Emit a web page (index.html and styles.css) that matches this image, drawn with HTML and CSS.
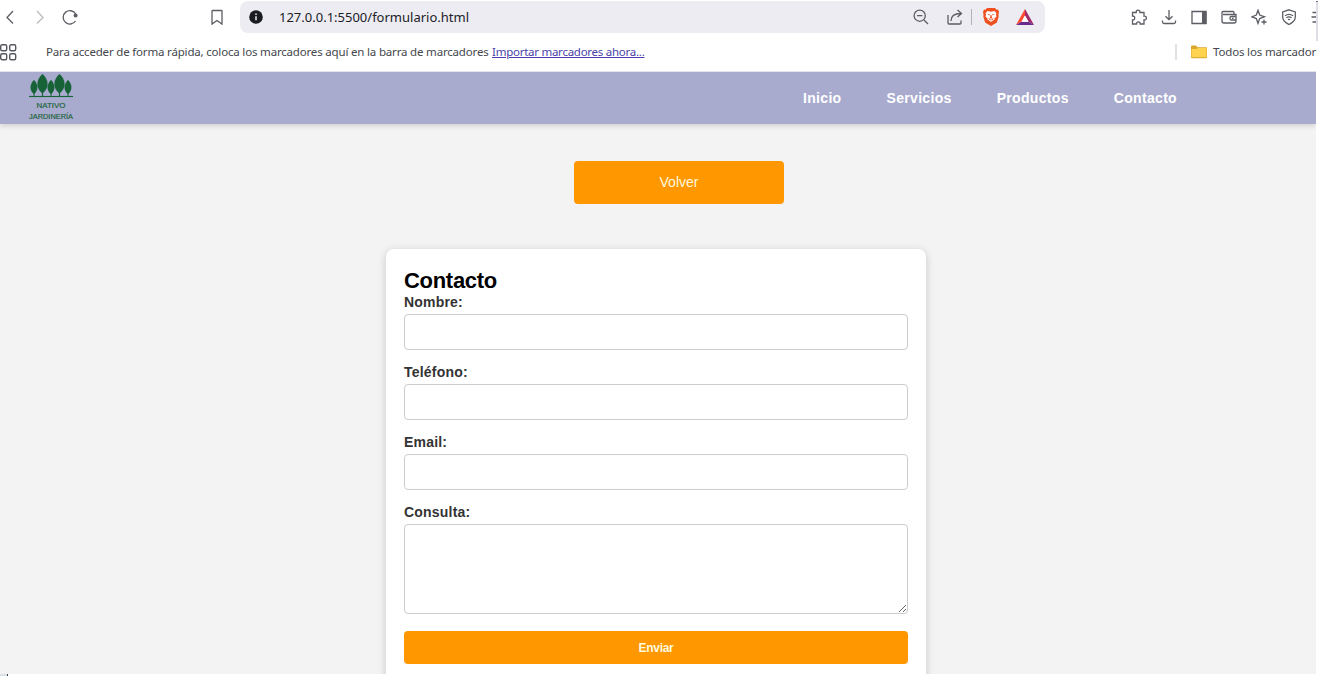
FILE: index.html
```html
<!DOCTYPE html>
<html lang="es">
<head>
<meta charset="utf-8">
<title>Nativo Jardinería - Contacto</title>
<link rel="stylesheet" href="styles.css">
</head>
<body>
<div class="window">
  <div class="toolbar">
    <div class="nav-icons">
      <svg class="icon" viewBox="0 0 16 16"><path d="M11 2 5 8.500l6 6"/></svg>
      <svg class="icon faded" viewBox="0 0 16 16"><path d="m5 2 6 6.500-6 6"/></svg>
      <svg class="icon" viewBox="0 0 16 16"><path d="M13.700 5A6.700 6.700 0 1 0 13.500 12"/><circle class="solid" cx="13.600" cy="6.500" r="2"/></svg>
    </div>
    <svg class="icon bookmark" viewBox="0 0 16 16"><path d="M3.500 1.500h9q.5 0 .5.600v13l-5-3.600-5 3.600v-13q0-.6.500-.6z"/></svg>
    <div class="address">
      <svg class="info" viewBox="0 0 14 14"><circle cx="7" cy="7" r="6.800"/><path d="M7 6.200v4M7 3.500v1.500"/></svg>
      <span class="url">127.0.0.1:5500/formulario.html</span>
      <svg class="icon zoom" viewBox="0 0 16 16"><circle cx="6.700" cy="6.700" r="5.600"/><path d="m11 11 4 4M4 6.700h5.400"/></svg>
      <svg class="icon share" viewBox="0 0 16 16"><path d="M1 6v8q0 1 1 1h11q1 0 1-1v-2.500M4 12c0-5 3-7.500 10-7.500M10.500 1 14.500 4.500l-4 3.500"/></svg>
      <span class="divider"></span>
      <svg class="brave" viewBox="0 0 16 18"><path fill="#f0501e" d="M4 0h8l1.500 1.700 1.500-.2 1 2.500-.5 2.500.2 2-1.800 6L8 18l-5.900-3.500-1.800-6 .2-2L0 4l1-2.500 1.500.2z"/><path fill="#fff" d="m4.500 3 3.500.7 3.500-.7 2 2.300-.6 1.200.6 2-2.200 2.300.3 1-1 .3L8 14l-2.600-1.900-1-.3.300-1-2.200-2.300.6-2-.6-1.200z"/><path fill="#f0501e" d="m4 5.700 3 .7-.5 1.200zm8 0-3 .7.500 1.200zM7.500 7h1l.5 3-1 .8-1-.8zM5.500 9.400 8 12l2.500-2.600-.5 2L8 12.600l-2-1.200z"/></svg>
      <svg class="bat" viewBox="0 0 18 16"><path fill="#ff4b31" d="M9 0 0 16l5.500-3.300L9 6.500z"/><path fill="#a02868" d="m9 0 9 16-5.500-3.300L9 6.500z"/><path fill="#672b90" d="M0 16h18l-5.500-3.300h-7z"/><path fill="#fff" d="m9 6.500 3.500 6.200h-7z"/></svg>
    </div>
    <div class="tools">
      <svg class="icon" viewBox="0 0 16 16"><path d="M2 3.500h3.200C4.500.3 9.500.3 8.900 3.500H13v3.600c3.200-.6 3.200 4.400 0 3.800V15H9.200c.4-2.800-4-2.800-3.600 0H1.500v-4c3 .4 3-4.400 0-4V3.500z"/></svg>
      <svg class="icon" viewBox="0 0 16 16"><path d="M8 1v9.500M4.500 7.200 8 10.700l3.500-3.500M1.500 11.500V13q0 1.500 1.500 1.500h10q1.500 0 1.500-1.500v-1.500"/></svg>
      <svg class="icon" viewBox="0 0 16 16"><path d="M1 2.500h14v12H1z"/><path class="solid" d="M11 2h4.500v13H11z"/></svg>
      <svg class="icon" viewBox="0 0 16 16"><path d="M13 5V3.500q0-1-1-1H2q-1 0-1 1V12q0 2 2 2h10q2 0 2-2V5.500H2M15 7.500h-4.500q-1.500 0-1.500 1.300v.9q0 1.300 1.500 1.300H15M11 9.300h1.500"/></svg>
      <svg class="icon" viewBox="0 0 16 16"><path d="M7 1.200 8.700 6l4.800 1.800-4.800 1.800L7 14.400 5.300 9.600.7 7.800 5.300 6z"/><path d="M13 10.500v5M10.500 13h5"/></svg>
      <svg class="icon" viewBox="0 0 16 16"><path d="m8 .8 6.300 2.100v5.300c0 3.500-3.200 5.600-6.300 7.400-3.100-1.800-6.300-3.900-6.300-7.400V2.900z"/><path d="M4 6.800q4-2.800 8 0M5.400 8.800q2.600-1.700 5.200 0M7 10.600q1-.6 2 0"/></svg>
      <svg class="icon" viewBox="0 0 16 16"><path d="M1.500 3.500h13M.5 8h14M1.500 13h13"/></svg>
    </div>
  </div>

  <div class="bookmarks">
    <svg class="apps" viewBox="0 0 17 17"><rect x=".7" y=".7" width="6" height="6" rx="1.500"/><rect x="9.700" y=".7" width="6" height="6" rx="1.500"/><rect x=".7" y="9.700" width="6" height="6" rx="1.500"/><rect x="9.700" y="9.700" width="6" height="6" rx="1.500"/></svg>
    <span class="hint">Para acceder de forma rápida, coloca los marcadores aquí en la barra de marcadores</span>
    <a class="import">Importar marcadores ahora...</a>
    <span class="separator"></span>
    <svg class="folder" viewBox="0 0 16 14"><path fill="#dca62c" d="M0 1.500Q0 .5 1 .5h4l1.500 1.700H15q1 0 1 1V12q0 1.300-1 1.300H1q-1 0-1-1.300z"/><path fill="#ffd34e" d="M.5 4h5L7 3h8.500v9.300H.5z"/></svg>
    <span class="all">Todos los marcador</span>
  </div>

  <div class="page">
    <header class="site-header">
      <svg class="logo" viewBox="0 0 46 50">
        <g fill="#176337">
          <path d="M5 7c4 4 5 10 0 14-5-4-4-10 0-14zM13.500 1c6.500 6 7 14 0 19.500-7-5.500-6.500-13.500 0-19.500zM22 7c4 4 5 10 0 14-5-4-4-10 0-14zM30.500 1c6.500 6 7 14 0 19.500-7-5.500-6.500-13.500 0-19.500zM39 7c4 4 5 10 0 14-5-4-4-10 0-14z"/>
          <path d="M0 23h44v1H0zM4.600 19h.8v4h-.8zM13 18h1v5h-1zM21.600 19h.8v4h-.8zM30 18h1v5h-1zM38.600 19h.8v4h-.8z"/>
          <text x="7.500" y="34.500" textLength="29" lengthAdjust="spacingAndGlyphs">NATIVO</text>
          <text x="0" y="45.500" textLength="44" lengthAdjust="spacingAndGlyphs">JARDINERÍA</text>
        </g>
      </svg>
      <nav class="menu"><a>Inicio</a><a>Servicios</a><a>Productos</a><a>Contacto</a></nav>
    </header>
    <main class="content">
      <a class="back">Volver</a>
      <form class="card">
        <h2>Contacto</h2>
        <label for="nombre">Nombre:</label>
        <input id="nombre" type="text">
        <label for="telefono">Teléfono:</label>
        <input id="telefono" type="text">
        <label for="email">Email:</label>
        <input id="email" type="text">
        <label for="consulta">Consulta:</label>
        <textarea id="consulta"></textarea>
        <button type="button">Enviar</button>
      </form>
    </main>
  </div>
  <div class="window-edge"></div>
  <div class="status-edge"></div>
</div>
</body>
</html>
```
FILE: styles.css
```css
* { box-sizing: border-box; }
body { margin: 0; background: #fff; overflow: hidden; font-family: "Liberation Sans", Arial, sans-serif; }
.window { position: relative; width: 1318px; height: 676px; overflow: hidden; padding-right: 2px; }

.toolbar { display: flex; align-items: center; height: 34px; padding-left: 2px; overflow: hidden; }
.icon { width: 16px; height: 16px; flex: none; fill: none; stroke: #5c5e64; stroke-width: 1.3; }
.icon .solid { fill: #5c5e64; stroke: none; }
.faded { stroke: #b9bbc0; }
.nav-icons, .tools { display: flex; gap: 14px; flex: none; }
.bookmark { margin-left: 131px; }
.address { display: flex; align-items: center; flex: none; width: 805px; height: 32px; margin-left: 15px; padding-left: 9px; border-radius: 8px; background: #edecf2; }
.info { width: 14px; height: 14px; fill: #1b1c21; stroke: #edecf2; stroke-width: 1.5; }
.info circle { stroke: none; }
.url { width: 634px; margin-left: 16px; font: 13px/18px "Noto Sans", sans-serif; color: #202127; }
.share { margin-left: 18px; }
.divider { width: 1px; height: 16px; margin-left: 8px; background: #b3b3ba; }
.brave { width: 16px; height: 18px; margin-left: 11px; }
.bat { width: 18px; height: 16px; margin-left: 17px; }
.tools { margin-left: 86px; }

.bookmarks { display: flex; align-items: center; height: 38px; padding-bottom: 1px; border-bottom: 1px solid #e3e2ee; font: 11.5px/18px "Noto Sans", sans-serif; letter-spacing: -.18px; color: #45474d; white-space: nowrap; }
.apps { width: 17px; height: 17px; flex: none; fill: none; stroke: #55575d; stroke-width: 1.4; }
.hint { width: 446px; margin-left: 29px; flex: none; }
.import { width: 153px; flex: none; color: #4a3fa8; text-decoration: underline; letter-spacing: -.26px; }
.separator { width: 2px; height: 16px; margin-left: 530px; flex: none; background: #e1e1e6; }
.folder { width: 16px; height: 14px; margin-left: 14px; flex: none; }
.all { margin-left: 6px; letter-spacing: -.16px; }

.page { height: 602px; background: #f3f3f3; overflow: hidden; }
.site-header { display: flex; align-items: center; justify-content: space-between; height: 52px; padding: 0 139px 0 29px; background: #a9abce; box-shadow: 0 2px 5px rgba(0, 0, 0, .15); }
.logo { width: 46px; height: 50px; font-size: 7px; stroke: #176337; stroke-width: .15; }
.menu { display: flex; gap: 45px; color: #fff; font-size: 14px; font-weight: bold; letter-spacing: .32px; }
.content { display: flex; flex-direction: column; align-items: center; padding-top: 37px; }
.back { width: 210px; height: 43px; margin-left: 42px; border-radius: 4px; background: #ff9800; color: #fff9df; font-size: 14px; line-height: 43px; text-align: center; }
.card { display: flex; flex-direction: column; width: 540px; height: 450px; margin: 45px 4px 0 0; padding: 18px; flex: none; border-radius: 8px; background: #fff; box-shadow: 0 2px 9px rgba(0, 0, 0, .18); }
.card h2 { margin: 0; font-size: 22px; line-height: 27px; letter-spacing: -.3px; color: #000; }
.card label { padding-top: 1px; font-size: 14px; font-weight: bold; line-height: 15px; letter-spacing: .2px; color: #333; }
.card input, .card textarea { flex: none; width: 100%; height: 36px; margin: 4px 0 14px; border: 1px solid #ccc; border-radius: 4px; background: #fff; }
.card textarea { height: 90px; margin-bottom: 17px; }
.card button { height: 33px; flex: none; border: 0; border-radius: 4px; background: #ff9800; color: #fff9df; font: bold 12px "Liberation Sans", Arial, sans-serif; letter-spacing: -.3px; }

.window-edge { position: absolute; top: 1px; right: 0; width: 2px; height: 40px; background: #dedde6; border-top: 1px solid #777; }
.status-edge { position: absolute; left: 0; bottom: 0; width: 8px; height: 2px; background: #d8dfe6; border-right: 1px solid #444; }
```
